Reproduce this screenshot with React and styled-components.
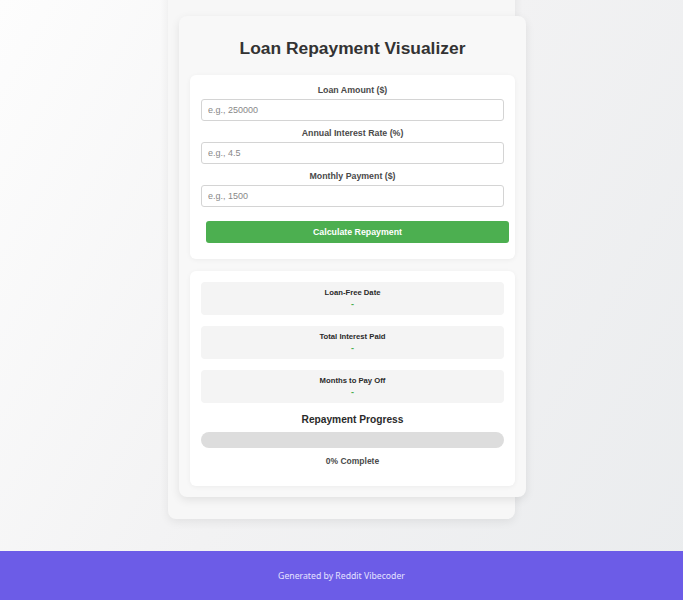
import React from 'react';
import styled, { createGlobalStyle } from 'styled-components';

const GlobalStyle = createGlobalStyle`
  html, body {
    margin: 0;
    padding: 0;
  }
  body {
    font-family: 'Liberation Sans', Arial, sans-serif;
    background: linear-gradient(120deg, #fdfdfd 0%, #f2f2f3 50%, #eaecee 100%);
    min-height: 100vh;
  }
`;

const Page = styled.div`
  min-height: 100vh;
  display: flex;
  flex-direction: column;
  overflow: hidden;
`;

const Main = styled.main`
  flex: 1;
`;

const Container = styled.div`
  width: 325px;
  margin: -20px auto 0;
  padding: 36px 11px 22px;
  background: #f7f7f7;
  border-radius: 8px;
  box-shadow: 0 3px 10px rgba(0, 0, 0, 0.07);
`;

const Card = styled.div`
  width: 100%;
  padding: 11px;
  background: #f8f8f8;
  border-radius: 8px;
  box-shadow: 0 3px 10px rgba(0, 0, 0, 0.09);
`;

const Title = styled.h1`
  margin: 11px 0 17px;
  font-size: 17.4px;
  line-height: 20px;
  font-weight: bold;
  color: #333;
  text-align: center;
`;

const Section = styled.section`
  background: #fff;
  border-radius: 6px;
  padding: ${(p) => p.$pad};
  margin-top: ${(p) => p.$top || 0}px;
  box-shadow: 0 1px 5px rgba(0, 0, 0, 0.05);
`;

const Label = styled.label`
  display: block;
  font-size: 8.8px;
  line-height: 10px;
  font-weight: bold;
  color: #4a4a4a;
  text-align: center;
  margin: ${(p) => (p.$first ? 0 : 7)}px 0 4px;
`;

const Input = styled.input`
  display: block;
  box-sizing: border-box;
  width: 100%;
  height: 22px;
  padding: 0 6px;
  border: 1px solid #d4d4d4;
  border-radius: 3px;
  font-family: 'Liberation Sans', Arial, sans-serif;
  font-size: 9px;
  color: #333;
  background: #fff;
  outline: none;

  &::placeholder {
    color: #888;
  }
`;

const Button = styled.button`
  display: block;
  width: 100%;
  height: 22px;
  margin: 14px 0 0 5px;
  border: none;
  border-radius: 3px;
  background: #4caf50;
  color: #fff;
  font-family: 'Liberation Sans', Arial, sans-serif;
  font-size: 8.8px;
  font-weight: bold;
  cursor: pointer;
`;

const Stat = styled.div`
  background: #f4f4f4;
  border-radius: 4px;
  padding: 6px;
  margin-bottom: 11px;
  text-align: center;
`;

const StatLabel = styled.div`
  font-size: 7.7px;
  line-height: 9px;
  font-weight: bold;
  color: #2a2a2a;
`;

const StatValue = styled.div`
  margin-top: 2px;
  font-size: 9px;
  line-height: 10px;
  font-weight: bold;
  color: #4caf50;
`;

const ProgressTitle = styled.h3`
  margin: 10px 0 6px;
  font-size: 10.2px;
  line-height: 12px;
  font-weight: bold;
  color: #2a2a2a;
  text-align: center;
`;

const Track = styled.div`
  height: 16px;
  border-radius: 8px;
  background: #ddd;
  overflow: hidden;
`;

const Fill = styled.div`
  height: 100%;
  background: #4caf50;
`;

const ProgressText = styled.p`
  margin: 8px 0 9px;
  font-size: 8.5px;
  line-height: 10px;
  font-weight: bold;
  color: #4a4a4a;
  text-align: center;
`;

const Footer = styled.footer`
  height: 49px;
  background: #6c5ce7;
  display: flex;
  align-items: center;
  justify-content: center;
  color: #e6e3ff;
  font-family: 'Noto Sans', 'Open Sans', sans-serif;
  font-size: 8.7px;
`;

const fields = [
  { label: 'Loan Amount ($)', placeholder: 'e.g., 250000' },
  { label: 'Annual Interest Rate (%)', placeholder: 'e.g., 4.5' },
  { label: 'Monthly Payment ($)', placeholder: 'e.g., 1500' },
];

const stats = ['Loan-Free Date', 'Total Interest Paid', 'Months to Pay Off'];

const App = () => {
  const progress = 0;

  return (
    <Page>
      <GlobalStyle />
      <Main>
        <Container>
          <Card>
            <Title>Loan Repayment Visualizer</Title>
            <Section $pad="10px 11px 16px">
              {fields.map((f, i) => (
                <div key={f.label}>
                  <Label $first={i === 0}>{f.label}</Label>
                  <Input type="number" placeholder={f.placeholder} />
                </div>
              ))}
              <Button>Calculate Repayment</Button>
            </Section>
            <Section $pad="11px" $top={12}>
              {stats.map((s) => (
                <Stat key={s}>
                  <StatLabel>{s}</StatLabel>
                  <StatValue>-</StatValue>
                </Stat>
              ))}
              <ProgressTitle>Repayment Progress</ProgressTitle>
              <Track>
                <Fill style={{ width: `${progress}%` }} />
              </Track>
              <ProgressText>{progress}% Complete</ProgressText>
            </Section>
          </Card>
        </Container>
      </Main>
      <Footer>Generated by Reddit Vibecoder</Footer>
    </Page>
  );
};

export default App;
